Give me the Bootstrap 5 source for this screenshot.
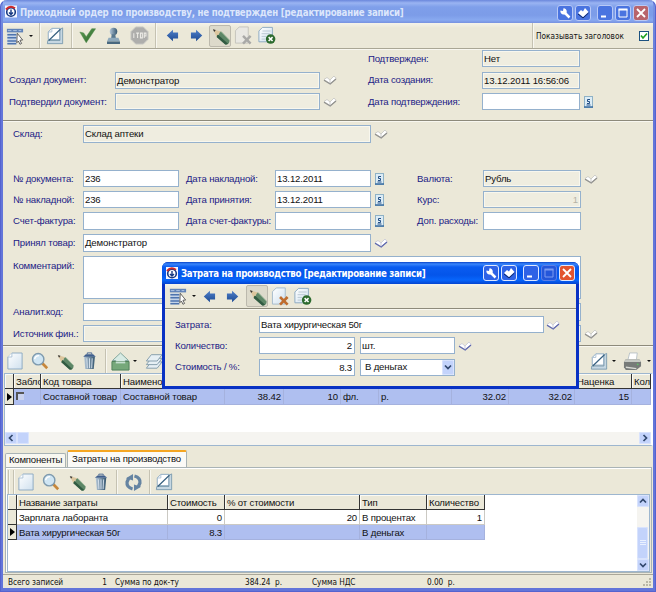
<!DOCTYPE html>
<html lang="ru">
<head>
<meta charset="utf-8">
<meta name="viewport" content="width=device-width, initial-scale=1">
<title>Приходный ордер по производству</title>
<link href="https://cdn.jsdelivr.net/npm/bootstrap@5.3.0/dist/css/bootstrap.min.css" rel="stylesheet">
<style>
body{width:656px;height:592px;overflow:hidden;background:#fff;font:9.6px/12px "Liberation Sans",Arial,sans-serif;letter-spacing:-.12px;color:#111;white-space:nowrap}
svg{display:block;flex:none}
.win{background:#ebe8d8}
.main-wrap{background:linear-gradient(#7c97e4,#6d84dc 30px,#6375d9 100px);border-radius:7px 7px 0 0;overflow:hidden;height:592px;padding:0 3px 4px 3px;box-shadow:inset 0 0 0 1px #5563cf}
.caption-bar{height:23px;flex:none;background:linear-gradient(#6b87dc 0,#9ab4f2 3px,#7f9fea 7px,#7c9ce8 15px,#88a9f0 20px,#7791e0 23px);color:#dce6fb;font:bold 9.6px/14px "DejaVu Sans Condensed","DejaVu Sans",sans-serif;padding:5px 4px 0 2px}
.caption-text{margin-left:3px;letter-spacing:-.22px;line-height:16px}
.cap-set{gap:2px}
.cap-btn{width:16px;height:16px;border:1px solid #b9c9f6;border-radius:3px;background:#4a74e0}
.cap-btn.x{background:#b8646c}
.dlg .cap-btn{background:#2e62e6;border-color:#dfe8ff}
.dlg .cap-btn.x{background:#e2542f}
.dlg .cap-btn.off{background:#2456da;border-color:#5b7fe6}
.tools{display:grid;align-items:center;justify-items:center;height:26px;background:linear-gradient(#f5f3ea,#ebe8d8 5px);border-bottom:1px solid #a9a695;box-shadow:0 1px #f8f7f0}
.t1{grid-template-columns:24px 8px 8px 24px 8px 24px 28px 24px 9px 24px 25px 22px 24px 24px 1fr 121px}
.t2{grid-template-columns:24px 25px 26px 22px 10px 20px 10px 27px 1fr 20px 10px 26px 8px;height:26px;border:0;box-shadow:none;background:none;padding-top:2px}
.t3{grid-template-columns:4px 6px 20px 30px 22px 25px 6px 28px 5px 24px;height:24px;border:0;box-shadow:none;background:none;justify-content:start}
.td{grid-template-columns:24px 8px 22px 25px 24px 22px 24px;justify-content:start;height:25px;border-color:#8d8a7b;padding-left:1px}
.sepr{width:1px;height:100%;background:#c5c2b2;box-shadow:1px 0 #f8f7f0}
.pressed{width:22px;height:22px;border:1px solid #bcb9ad;background:#dddacb;border-radius:2px;display:grid;place-items:center}
.caret{border:2.5px solid transparent;border-top-color:#111;border-bottom:0}
.fgrid{display:grid;align-content:start}
.lbl{color:#1b1b86;align-self:center}
.f1>.lbl:nth-child(6n+1){letter-spacing:-.15px}
.f1>.lbl:nth-child(6n+4){letter-spacing:-.2px}
.fld{height:100%;border:1px solid #95b1cd;background:#fff;padding:1px 2px 0 1px;line-height:13px;overflow:hidden}
.ro{background:#efede0;box-shadow:inset 0 0 0 1px #f8f7ee}
.f1{height:71px;grid-template-columns:106px 205px 48px 114px 98px 1fr;grid-template-rows:17px 17px 17px;row-gap:4.5px;padding:1px 0 0 6px}
.hline{height:2px;background:#8d8a7b;border-bottom:1px solid #f8f7f0;flex:none}
.f2{height:223px;padding:3px 0 0 10px;grid-template-columns:70px 96px 7px 89px 96px 46px 66px 98px 1fr;grid-template-rows:18px 19px 17px 17px 18px 18px 43px 18px 17px;row-gap:4px;letter-spacing:-.15px}
.f2 .wide{grid-column:2/6}
.rest{grid-column:7/10}
.f2 .full{grid-column:2/9}
.blank-row{grid-column:1/-1}
.fd{grid-template-columns:84px 96px 5px 95px 91px 1fr;grid-template-rows:17px 17px 17px;row-gap:4.4px;padding:7px 0 0 10px;letter-spacing:-.18px}
.fd .w4{grid-column:2/6;margin-right:2px}
.bk{align-self:center;margin-left:3px}
.cl{align-self:center;margin-left:4px}
#rate{color:#b5b3a6}
.g{display:grid;background:#fff}
.hd,.rw{display:grid}
.hd>*{background:#ebe8d8;border-right:1px solid #333;border-bottom:1px solid #333;box-shadow:inset 1px 1px #fbfaf4;overflow:hidden;padding:1px 2px;line-height:13px}
.rw>*{border-right:1px solid #cbc9c3;border-bottom:1px solid #cbc9c3;overflow:hidden;padding:1px 2px;line-height:13px}
.sel>*{background:#afbff0;border-color:#a5b2de}
.rw>.ind,.hd>.ind{background:#ebe8d8;border-color:#333;padding:0;display:grid;place-items:center}
.ptr{border:4px solid transparent;border-left:5px solid #000;border-right:0}
.c1{grid-template-columns:9px 27px 80px 104px 59px 57px 38px 73px 57px 66px 57px 1fr}
.c2{grid-template-columns:9px 151px 57px 135px 67px 58px;letter-spacing:-.17px}
.num{text-align:right}
.g1{height:73px;border:1px solid #9db6cf;border-right:2px solid #fff;grid-template-rows:15px 16px 1fr 13px;margin:0 0 0 1px}
.rowchk{width:8px;height:8px;border:solid #555;border-width:2px 0 0 2px;margin-top:2px;background:#c9d2ee}
.sb{background:#f5f4f0}
.sbtn{width:12px;height:12px;border-radius:2px;background:#c3d3fb;box-shadow:inset 0 0 0 1px #d9e3fd;display:grid;place-items:center}
.left{transform:rotate(90deg)}
.right{transform:rotate(-90deg)}
.up{transform:rotate(180deg)}
.tabrow{height:21px;padding-left:2px;letter-spacing:-.22px}
.tabx{border:1px solid #a9b3b5;border-bottom:0;border-radius:2px 2px 0 0;background:#f8f7f1;padding:0 3px;height:14px}
.tab-on{border-top:2px solid #f5a623;background:#fbfaf7;height:17px;padding:1px 5px 0 4px;margin-left:1px}
.pane{height:106px;border:1px solid #a9b3b5;box-shadow:inset 1px 1px #fff;margin:0 1px 0 2px;padding-top:2px}
.g2{height:78px;background:#fff;border:1px solid #9db6cf;margin:0 1px}
.g2 .hd,.g2 .rw{height:15px}
.vs{width:12px}
.thumb{height:32px;width:11px}
.drop{height:15px;width:12px}
.status{height:14px;font:8.2px/15px "DejaVu Sans Condensed","DejaVu Sans",sans-serif;display:grid;grid-template-columns:87px 12px 8px 123px 44px 30px 49px 1fr 12px;padding-left:5px;border-top:1px solid #aaa799;letter-spacing:-.05px}
.zero{padding-left:66px}
.showcap{font:8.2px/12px "DejaVu Sans Condensed",sans-serif;margin-left:3px;letter-spacing:0}
.chk{width:10px;height:10px;border:1px solid #1c5180;background:#fff;margin-right:4px}
.dlg{position:absolute;left:162px;top:262px;width:417px;height:127px;background:#0831c4;border-radius:6px 6px 0 0;padding:0 3px 3px}
.dlg .caption-bar{margin:0 -3px;border-radius:6px 6px 0 0;height:22px;padding:3px 4px 0 4px;background:linear-gradient(#0843c8 0,#3a86fb 2px,#0a5cf0 5px,#0455ea 13px,#0765fb 18px,#0444d0 22px);color:#fff}
.dlg .caption-text{letter-spacing:-.28px;line-height:18px}
.dlg-body{height:102px}
</style>
<script src="https://cdn.jsdelivr.net/npm/bootstrap@5.3.0/dist/js/bootstrap.bundle.min.js"></script>
</head>
<body>
<svg width="0" height="0" class="position-absolute">
<defs>
<linearGradient id="pg" x1="0" y1="0" x2="1" y2="1"><stop offset="0" stop-color="#fff"/><stop offset="1" stop-color="#cfe0ee"/></linearGradient>
<linearGradient id="bl" x1="0" y1="0" x2="0" y2="1"><stop offset="0" stop-color="#4f7fc8"/><stop offset="1" stop-color="#1c4a94"/></linearGradient>
<linearGradient id="gn" x1="0" y1="0" x2="1" y2="1"><stop offset="0" stop-color="#5f9a55"/><stop offset="1" stop-color="#2c6a2c"/></linearGradient>
<linearGradient id="st" x1="0" y1="0" x2="1" y2="0"><stop offset="0" stop-color="#b4c7d8"/><stop offset="1" stop-color="#34566f"/></linearGradient>
<symbol id="logo" viewBox="0 0 12 12"><rect width="12" height="12" fill="#f4f6ff"/><circle cx="6" cy="6.500" r="4.300" fill="#fff" stroke="#173a83" stroke-width="1.600"/><path d="M1 4Q5-.8 10 2.800" fill="none" stroke="#d02828" stroke-width="2"/><path d="M6 4v4M4 7l2 2 2-2" stroke="#173a83" stroke-width="1.400" fill="none"/></symbol>
<symbol id="menu" viewBox="0 0 20 20"><rect x="1" y="2" width="18" height="4" fill="#5f82b8"/><path d="M2 4h4M8 4h4M14 4h3" stroke="#b4c9e6"/><rect x="1.500" y="7" width="10" height="12" fill="#c3d3e8"/><path d="M1.500 8.500h10M1.500 12h10M1.500 15.500h10M1.500 18.500h10" stroke="#4e74ae" stroke-width="1.700"/><path d="M12.500 7l6 7.500-3 .2 1.800 3.600-1.800 .9-1.700-3.600-1.800 1.900z" fill="#fff" stroke="#444" stroke-width=".9"/></symbol>
<symbol id="page" viewBox="0 0 18 20"><path d="M5.500 1H17v18H1V5.500z" fill="url(#pg)" stroke="#87a6c0"/><path d="M5.500 1v4.500H1" fill="#fff" stroke="#a9c0d4"/></symbol>
<symbol id="ruler" viewBox="0 0 20 20"><path d="M6.500 1.500h9v12.500H2.500V5.500z" fill="#fff" stroke="#87a6c0"/><path d="M2.500 5.500h4v-4" fill="none" stroke="#a9c0d4"/><path d="M2 15h13.500V2.500L18.500 1v17.500H1.500z" fill="#c6d7e2" stroke="#7193aa" stroke-width=".9"/><path d="M3 15L16 2.500" stroke="#37607f" stroke-width="1.300"/></symbol>
<symbol id="check" viewBox="0 0 20 20"><path d="M1 6l4.500 1 3 4.500L15 2h4.500L8.500 18.500z" fill="url(#gn)" stroke="#4f8a4c" stroke-width=".6"/></symbol>
<symbol id="stamp" viewBox="0 0 16 20"><circle cx="8" cy="5" r="4.200" fill="url(#st)"/><path d="M6 8h4l.6 4.500H5.400z" fill="#58788f"/><path d="M2.500 12h11l1.700 4H.8z" fill="#8da8bb"/><path d="M.8 16h14.400v3H.8z" fill="#48687f"/></symbol>
<symbol id="stop" viewBox="0 0 20 20"><path d="M6 1h8l5 5v8l-5 5H6l-5-5V6z" fill="#aeaeac" stroke="#c9c9c4"/><path d="M4 7.500v5M6.500 7.500h3M8 7.500v5M11 7.500v5h2v-5zM15 12.500v-5h1.800v3H15" fill="none" stroke="#ecebe6" stroke-width="1.100"/></symbol>
<symbol id="al" viewBox="0 0 14 14"><path d="M.8 7L7.500 .8v3H13v6.400H7.500v3z" fill="url(#bl)"/></symbol>
<symbol id="ar" viewBox="0 0 14 14"><path d="M13.200 7L6.500 .8v3H1v6.400h5.500v3z" fill="url(#bl)"/></symbol>
<symbol id="pencil" viewBox="0 0 20 20"><path d="M2 3.500l8.500 2.300L6 11.500z" fill="#dcc69e"/><path d="M2 3.500l3 .8-1.600 2z" fill="#333"/><path d="M10.500 5.800L19.500 15q.3 2-1 3.500t-3.500 1L6 11.500l.8-2 1.500-.2.500-2z" fill="#5d8767"/><path d="M6 11.500l9 8q2 0 3-.7L7.500 9.200l-.7.3z" fill="#315b42"/><path d="M10.500 5.800L19.500 15" stroke="#8fae8f"/></symbol>
<symbol id="docx" viewBox="0 0 20 20"><path d="M5.500 1H15v17H1.500V5z" fill="url(#pg)" stroke="#a4bacb"/><path d="M9.500 10.500l8 8M17.500 10.500l-8 8" stroke="#bf6d2e" stroke-width="2.800"/></symbol>
<symbol id="docg" viewBox="0 0 20 20"><path d="M5 1h11v16H1V5z" fill="url(#pg)" stroke="#87a6c0"/><path d="M5 5h9M4 8h9M4 11h5M4 14h4" stroke="#b5c5d0"/><circle cx="14" cy="14" r="5.300" fill="#2d6b2f"/><path d="M11.800 11.800l4.400 4.400M16.200 11.800l-4.400 4.400" stroke="#fff" stroke-width="1.700"/></symbol>
<symbol id="docxg" viewBox="0 0 20 20"><path d="M5.500 1H15v17H1.500V5z" fill="#e9e8e3" stroke="#c4c3bd"/><path d="M9.500 10.500l8 8M17.500 10.500l-8 8" stroke="#a9a9a7" stroke-width="2.600"/></symbol>
<symbol id="lens" viewBox="0 0 20 20"><path d="M12 12l6 6" stroke="#c6873c" stroke-width="3"/><circle cx="8" cy="8" r="6.300" fill="#cfe5f3" stroke="#7e9aae" stroke-width="1.600"/><path d="M4 8Q5 4 9 4" stroke="#fff" stroke-width="1.600" fill="none"/></symbol>
<symbol id="trash" viewBox="0 0 16 20"><path d="M2 5h12l-1.300 14H3.300z" fill="url(#st)"/><path d="M5 7l.6 11M8 7v11M11 7l-.6 11" stroke="#dbe6f2"/><path d="M1 5.200L4 2.500h8l3 2.700z" fill="#3f5f8e"/><path d="M5.500 2.500V1h5v1.500" stroke="#3f5f8e" fill="none"/></symbol>
<symbol id="house" viewBox="0 0 20 20"><path d="M10 1l8.500 8H15v6H5V9H1.500z" fill="#d7ebe4" stroke="#7da39a"/><path d="M1 10h18v9H1z" fill="#76a87a" stroke="#4f8058"/><path d="M5 10h10v2H5z" fill="#c6dfd0"/></symbol>
<symbol id="layers" viewBox="0 0 20 20"><g fill="#e6eff4" stroke="#7f98a8"><path d="M7 11h12l-5.500 7h-12z"/><path d="M7 7h12l-5.500 7h-12z"/><path d="M7 3h12l-5.500 7h-12z"/></g></symbol>
<symbol id="printer" viewBox="0 0 20 20"><path d="M7 1h8l-1 8H5z" fill="#fff" stroke="#b9c3c8"/><path d="M3 7.500h14l2 3v4.500l-5 4H3l-2-3v-5.500z" fill="#777b79"/><path d="M3 7.500h14l2 3H1z" fill="#c7cac5"/><path d="M3 16l11 1.500" stroke="#d9dbd6" stroke-width="1.500"/><circle cx="15.500" cy="13" r="1" fill="#62c06a"/></symbol>
<symbol id="refresh" viewBox="0 0 20 20"><path d="M9 16.800Q2.500 15 3.200 9.500L5 5.500M11 3.200Q17.500 5 16.800 10.500L15 14.500" fill="none" stroke="#6584a2" stroke-width="3.400"/><path d="M2 5.500L9.500 1v7zM18 14.500L10.500 19v-7z" fill="#6584a2"/></symbol>
<symbol id="bookg" viewBox="0 0 14 10"><path d="M1 4.500L4 2.500l3 2.500L11 1l2.200 2.500L7.200 8.500z" fill="#fff" stroke="#bdbdba" stroke-width=".7"/><path d="M1 5.200L7.200 9l5.800-5" fill="none" stroke="#90908e" stroke-width="1.200"/><path d="M7 5v3.500" stroke="#b5b5b2" stroke-width=".7"/></symbol>
<symbol id="bookb" viewBox="0 0 14 10"><path d="M1 4.500L4 2.500l3 2.500L11 1l2.200 2.500L7.200 8.500z" fill="#fff" stroke="#bfc0d2" stroke-width=".7"/><path d="M1 5.200L7.200 9l5.800-5" fill="none" stroke="#5a65ae" stroke-width="1.200"/><path d="M7 5v3.500" stroke="#b5b5c8" stroke-width=".7"/></symbol>
<symbol id="cal" viewBox="0 0 9 12"><rect x=".5" y=".5" width="8" height="11" fill="#dcecf6" stroke="#8fb2c6"/><path d="M0 11h9" stroke="#3a6da0" stroke-width="1.500"/><path d="M6 3.500H3.500v2H5.500v2H3M2.500 9h4" fill="none" stroke="#234f86" stroke-width="1"/></symbol>
<symbol id="wr" viewBox="0 0 14 14"><path d="M6 6l5.500 5.500" stroke="#fff" stroke-width="2.500"/><path d="M2.500 4.500L5 5l.5-2.800A3.200 3.200 0 1 1 2.500 4.500z" fill="#fff"/></symbol>
<symbol id="bk" viewBox="0 0 14 14"><path d="M2 7l3-3 2 1.500L9 2l3.500 4L7 11z" fill="#fff"/><path d="M2 8l5 4 5.500-5" stroke="#10265c" fill="none"/></symbol>
<symbol id="mn" viewBox="0 0 14 14"><path d="M3 10.500h5" stroke="#fff" stroke-width="2.200"/></symbol>
<symbol id="mx" viewBox="0 0 14 14"><path d="M3 3.500h8v7.500H3z" fill="none" stroke="currentColor" stroke-width="1"/><path d="M2.500 3.500h9" stroke="currentColor" stroke-width="2"/></symbol>
<symbol id="cx" viewBox="0 0 14 14"><path d="M3 3l8 8M11 3l-8 8" stroke="#fff" stroke-width="1.800"/></symbol>
<symbol id="chev" viewBox="0 0 10 10"><path d="M2 3.500l3 3 3-3" fill="none" stroke="#32486e" stroke-width="1.700"/></symbol>
</defs>
</svg>

<div class="main-wrap">
<div class="win d-flex flex-column h-100">
  <div class="caption-bar d-flex">
    <svg width="12" height="13"><use href="#logo"/></svg>
    <span class="caption-text me-auto">Приходный ордер по производству, не подтвержден [редактирование записи]</span>
    <span class="d-flex cap-set">
      <svg class="cap-btn" viewBox="0 0 14 14"><use href="#wr"/></svg>
      <svg class="cap-btn me-1" viewBox="0 0 14 14"><use href="#bk"/></svg>
      <svg class="cap-btn" viewBox="0 0 14 14"><use href="#mn"/></svg>
      <svg class="cap-btn text-white" viewBox="0 0 14 14"><use href="#mx"/></svg>
      <svg class="cap-btn x" viewBox="0 0 14 14"><use href="#cx"/></svg>
    </span>
  </div>
  <div class="tools t1 flex-shrink-0">
    <svg width="18" height="18"><use href="#menu"/></svg><i class="caret"></i><i class="sepr"></i>
    <svg width="18" height="18"><use href="#ruler"/></svg><i class="sepr"></i>
    <svg width="17" height="17"><use href="#check"/></svg>
    <svg width="15" height="18"><use href="#stamp"/></svg>
    <svg width="19" height="19"><use href="#stop"/></svg><i class="sepr"></i>
    <svg width="13" height="13"><use href="#al"/></svg>
    <svg width="13" height="13"><use href="#ar"/></svg>
    <span class="pressed"><svg width="19" height="19"><use href="#pencil"/></svg></span>
    <svg width="19" height="19"><use href="#docxg"/></svg>
    <svg width="18" height="19"><use href="#docg"/></svg><span></span>
    <div class="d-flex w-100 h-100 align-items-center"><i class="sepr"></i><span class="showcap">Показывать заголовок</span><span class="chk ms-auto"><svg viewBox="0 0 8 8" width="8" height="8"><path d="M1 3.500l2 2.500 4-4.500" fill="none" stroke="#21a121" stroke-width="1.600"/></svg></span></div>
  </div>
  <div class="fgrid f1 flex-shrink-0">
    <span></span><span></span><span></span><span class="lbl">Подтвержден:</span><div class="fld ro">Нет</div><span></span>
    <span class="lbl">Создал документ:</span><div class="fld ro">Демонстратор</div><svg class="bk" width="14" height="10"><use href="#bookg"/></svg><span class="lbl">Дата создания:</span><div class="fld ro">13.12.2011 16:56:06</div><span></span>
    <span class="lbl">Подтвердил документ:</span><div class="fld ro"></div><svg class="bk" width="14" height="10"><use href="#bookg"/></svg><span class="lbl">Дата подтверждения:</span><div class="fld"></div><svg class="cl" width="9" height="12"><use href="#cal"/></svg>
  </div>
  <div class="hline"></div>
  <div class="fgrid f2 flex-shrink-0">
    <span class="lbl">Склад:</span><div class="fld ro wide">Склад аптеки</div><svg class="bk" width="14" height="10"><use href="#bookg"/></svg><span class="rest"></span>
    <span class="blank-row"></span>
    <span class="lbl">№ документа:</span><div class="fld">236</div><span></span><span class="lbl">Дата накладной:</span><div class="fld">13.12.2011</div><svg class="cl" width="9" height="12"><use href="#cal"/></svg><span class="lbl">Валюта:</span><div class="fld ro">Рубль</div><svg class="bk" width="14" height="10"><use href="#bookg"/></svg>
    <span class="lbl">№ накладной:</span><div class="fld">236</div><span></span><span class="lbl">Дата принятия:</span><div class="fld">13.12.2011</div><svg class="cl" width="9" height="12"><use href="#cal"/></svg><span class="lbl">Курс:</span><div class="fld ro num" id="rate">1</div><span></span>
    <span class="lbl">Счет-фактура:</span><div class="fld"></div><span></span><span class="lbl">Дата счет-фактуры:</span><div class="fld"></div><svg class="cl" width="9" height="12"><use href="#cal"/></svg><span class="lbl">Доп. расходы:</span><div class="fld"></div><span></span>
    <span class="lbl">Принял товар:</span><div class="fld wide">Демонстратор</div><svg class="bk" width="14" height="10"><use href="#bookb"/></svg><span class="rest"></span>
    <span class="lbl align-self-start pt-1">Комментарий:</span><div class="fld full"></div><span></span>
    <span class="lbl">Аналит.код:</span><div class="fld full"></div><span></span>
    <span class="lbl">Источник фин.:</span><div class="fld ro full"></div><svg class="bk" width="14" height="10"><use href="#bookg"/></svg>
  </div>
  <div class="hline"></div>
  <div class="tools t2 flex-shrink-0">
    <svg width="16" height="18"><use href="#page"/></svg>
    <svg width="18" height="18"><use href="#lens"/></svg>
    <svg width="18" height="18"><use href="#pencil"/></svg>
    <svg width="15" height="18"><use href="#trash"/></svg><i class="sepr"></i>
    <svg width="19" height="19"><use href="#house"/></svg><i class="caret"></i>
    <svg width="18" height="18"><use href="#layers"/></svg><span></span>
    <svg width="18" height="19"><use href="#ruler"/></svg><i class="caret"></i>
    <svg width="19" height="19"><use href="#printer"/></svg><i class="caret"></i>
  </div>
  <div class="g g1 flex-shrink-0">
    <div class="hd c1"><span class="ind"></span><span>Заблокирован</span><span>Код товара</span><span>Наименование</span><span></span><span></span><span></span><span></span><span></span><span></span><span>Наценка</span><span>Количество</span></div>
    <div class="rw sel c1"><span class="ind"><i class="ptr"></i></span><span><i class="d-block rowchk"></i></span><span>Составной товар</span><span>Составной товар</span><span class="num">38.42</span><span class="num">10</span><span>фл.</span><span>р.</span><span class="num">32.02</span><span class="num">32.02</span><span class="num">15</span><span></span></div>
    <div></div>
    <div class="sb d-flex justify-content-between"><span class="d-flex"><span class="sbtn"><svg width="10" height="10" class="left"><use href="#chev"/></svg></span><span class="sbtn"></span></span><span class="sbtn"><svg width="10" height="10" class="right"><use href="#chev"/></svg></span></div>
  </div>
  <div class="d-flex align-items-end flex-shrink-0 tabrow"><span class="tabx">Компоненты</span><span class="tabx tab-on">Затраты на производство</span></div>
  <div class="pane flex-shrink-0">
    <div class="tools t3"><i class="sepr"></i><i class="sepr"></i>
      <svg width="16" height="18"><use href="#page"/></svg>
      <svg width="18" height="18"><use href="#lens"/></svg>
      <svg width="18" height="18"><use href="#pencil"/></svg>
      <svg width="14" height="18"><use href="#trash"/></svg><i class="sepr"></i>
      <svg width="19" height="19"><use href="#refresh"/></svg><i class="sepr"></i>
      <svg width="18" height="18"><use href="#ruler"/></svg>
    </div>
    <div class="g2 d-flex justify-content-between">
      <div>
        <div class="hd c2"><span class="ind"></span><span>Название затраты</span><span>Стоимость</span><span>% от стоимости</span><span>Тип</span><span>Количество</span></div>
        <div class="rw c2"><span class="ind"></span><span>Зарплата лаборанта</span><span class="num">0</span><span class="num">20</span><span>В процентах</span><span class="num">1</span></div>
        <div class="rw sel c2"><span class="ind"><i class="ptr"></i></span><span>Вата хирургическая 50г</span><span class="num">8.3</span><span></span><span>В деньгах</span><span></span></div>
      </div>
      <div class="sb vs d-flex flex-column"><span class="sbtn"><svg width="10" height="10" class="up"><use href="#chev"/></svg></span><span class="flex-grow-1"></span><span class="sbtn thumb"><svg width="6" height="6" viewBox="0 0 6 6"><path d="M0 .5h6M0 2.500h6M0 4.500h6" stroke="#eaf1ff"/></svg></span><span class="sbtn"><svg width="10" height="10"><use href="#chev"/></svg></span></div>
    </div>
  </div>
  <div class="status mt-auto"><span>Всего записей</span><span class="num">1</span><span></span><span>Сумма по док-ту</span><span class="num">384.24&nbsp; р.</span><span></span><span>Сумма НДС</span><span class="zero">0.00&nbsp; р.</span><svg width="11" height="12" viewBox="0 0 11 12"><path d="M8 3h2v2H8zM8 6h2v2H8zM8 9h2v2H8zM5 6h2v2H5zM5 9h2v2H5zM2 9h2v2H2z" fill="#bab7a6"/></svg></div>
</div>
</div>

<div class="dlg">
  <div class="caption-bar d-flex">
    <svg width="12" height="16"><use href="#logo"/></svg>
    <span class="caption-text me-auto">Затрата на производство [редактирование записи]</span>
    <span class="d-flex cap-set">
      <svg class="cap-btn" viewBox="0 0 14 14"><use href="#wr"/></svg>
      <svg class="cap-btn me-1" viewBox="0 0 14 14"><use href="#bk"/></svg>
      <svg class="cap-btn" viewBox="0 0 14 14"><use href="#mn"/></svg>
      <svg class="cap-btn off" color="#7c9af0" viewBox="0 0 14 14"><use href="#mx"/></svg>
      <svg class="cap-btn x" viewBox="0 0 14 14"><use href="#cx"/></svg>
    </span>
  </div>
  <div class="win dlg-body">
    <div class="tools td">
      <svg width="18" height="18"><use href="#menu"/></svg><i class="caret"></i>
      <svg width="13" height="13"><use href="#al"/></svg>
      <svg width="13" height="13"><use href="#ar"/></svg>
      <span class="pressed"><svg width="19" height="19"><use href="#pencil"/></svg></span>
      <svg width="19" height="19"><use href="#docx"/></svg>
      <svg width="18" height="19"><use href="#docg"/></svg>
    </div>
    <div class="fgrid fd">
      <span class="lbl">Затрата:</span><div class="fld w4">Вата хирургическая 50г</div><svg class="bk ms-0" width="14" height="10"><use href="#bookb"/></svg>
      <span class="lbl">Количество:</span><div class="fld num">2</div><span></span><div class="fld">шт.</div><svg class="bk" width="14" height="10"><use href="#bookb"/></svg><span></span>
      <span class="lbl">Стоимость / %:</span><div class="fld num">8.3</div><span></span><div class="fld d-flex justify-content-between p-0 ps-1">В деньгах<span class="sbtn drop"><svg width="10" height="10"><use href="#chev"/></svg></span></div><span></span><span></span>
    </div>
  </div>
</div>
</body>
</html>
